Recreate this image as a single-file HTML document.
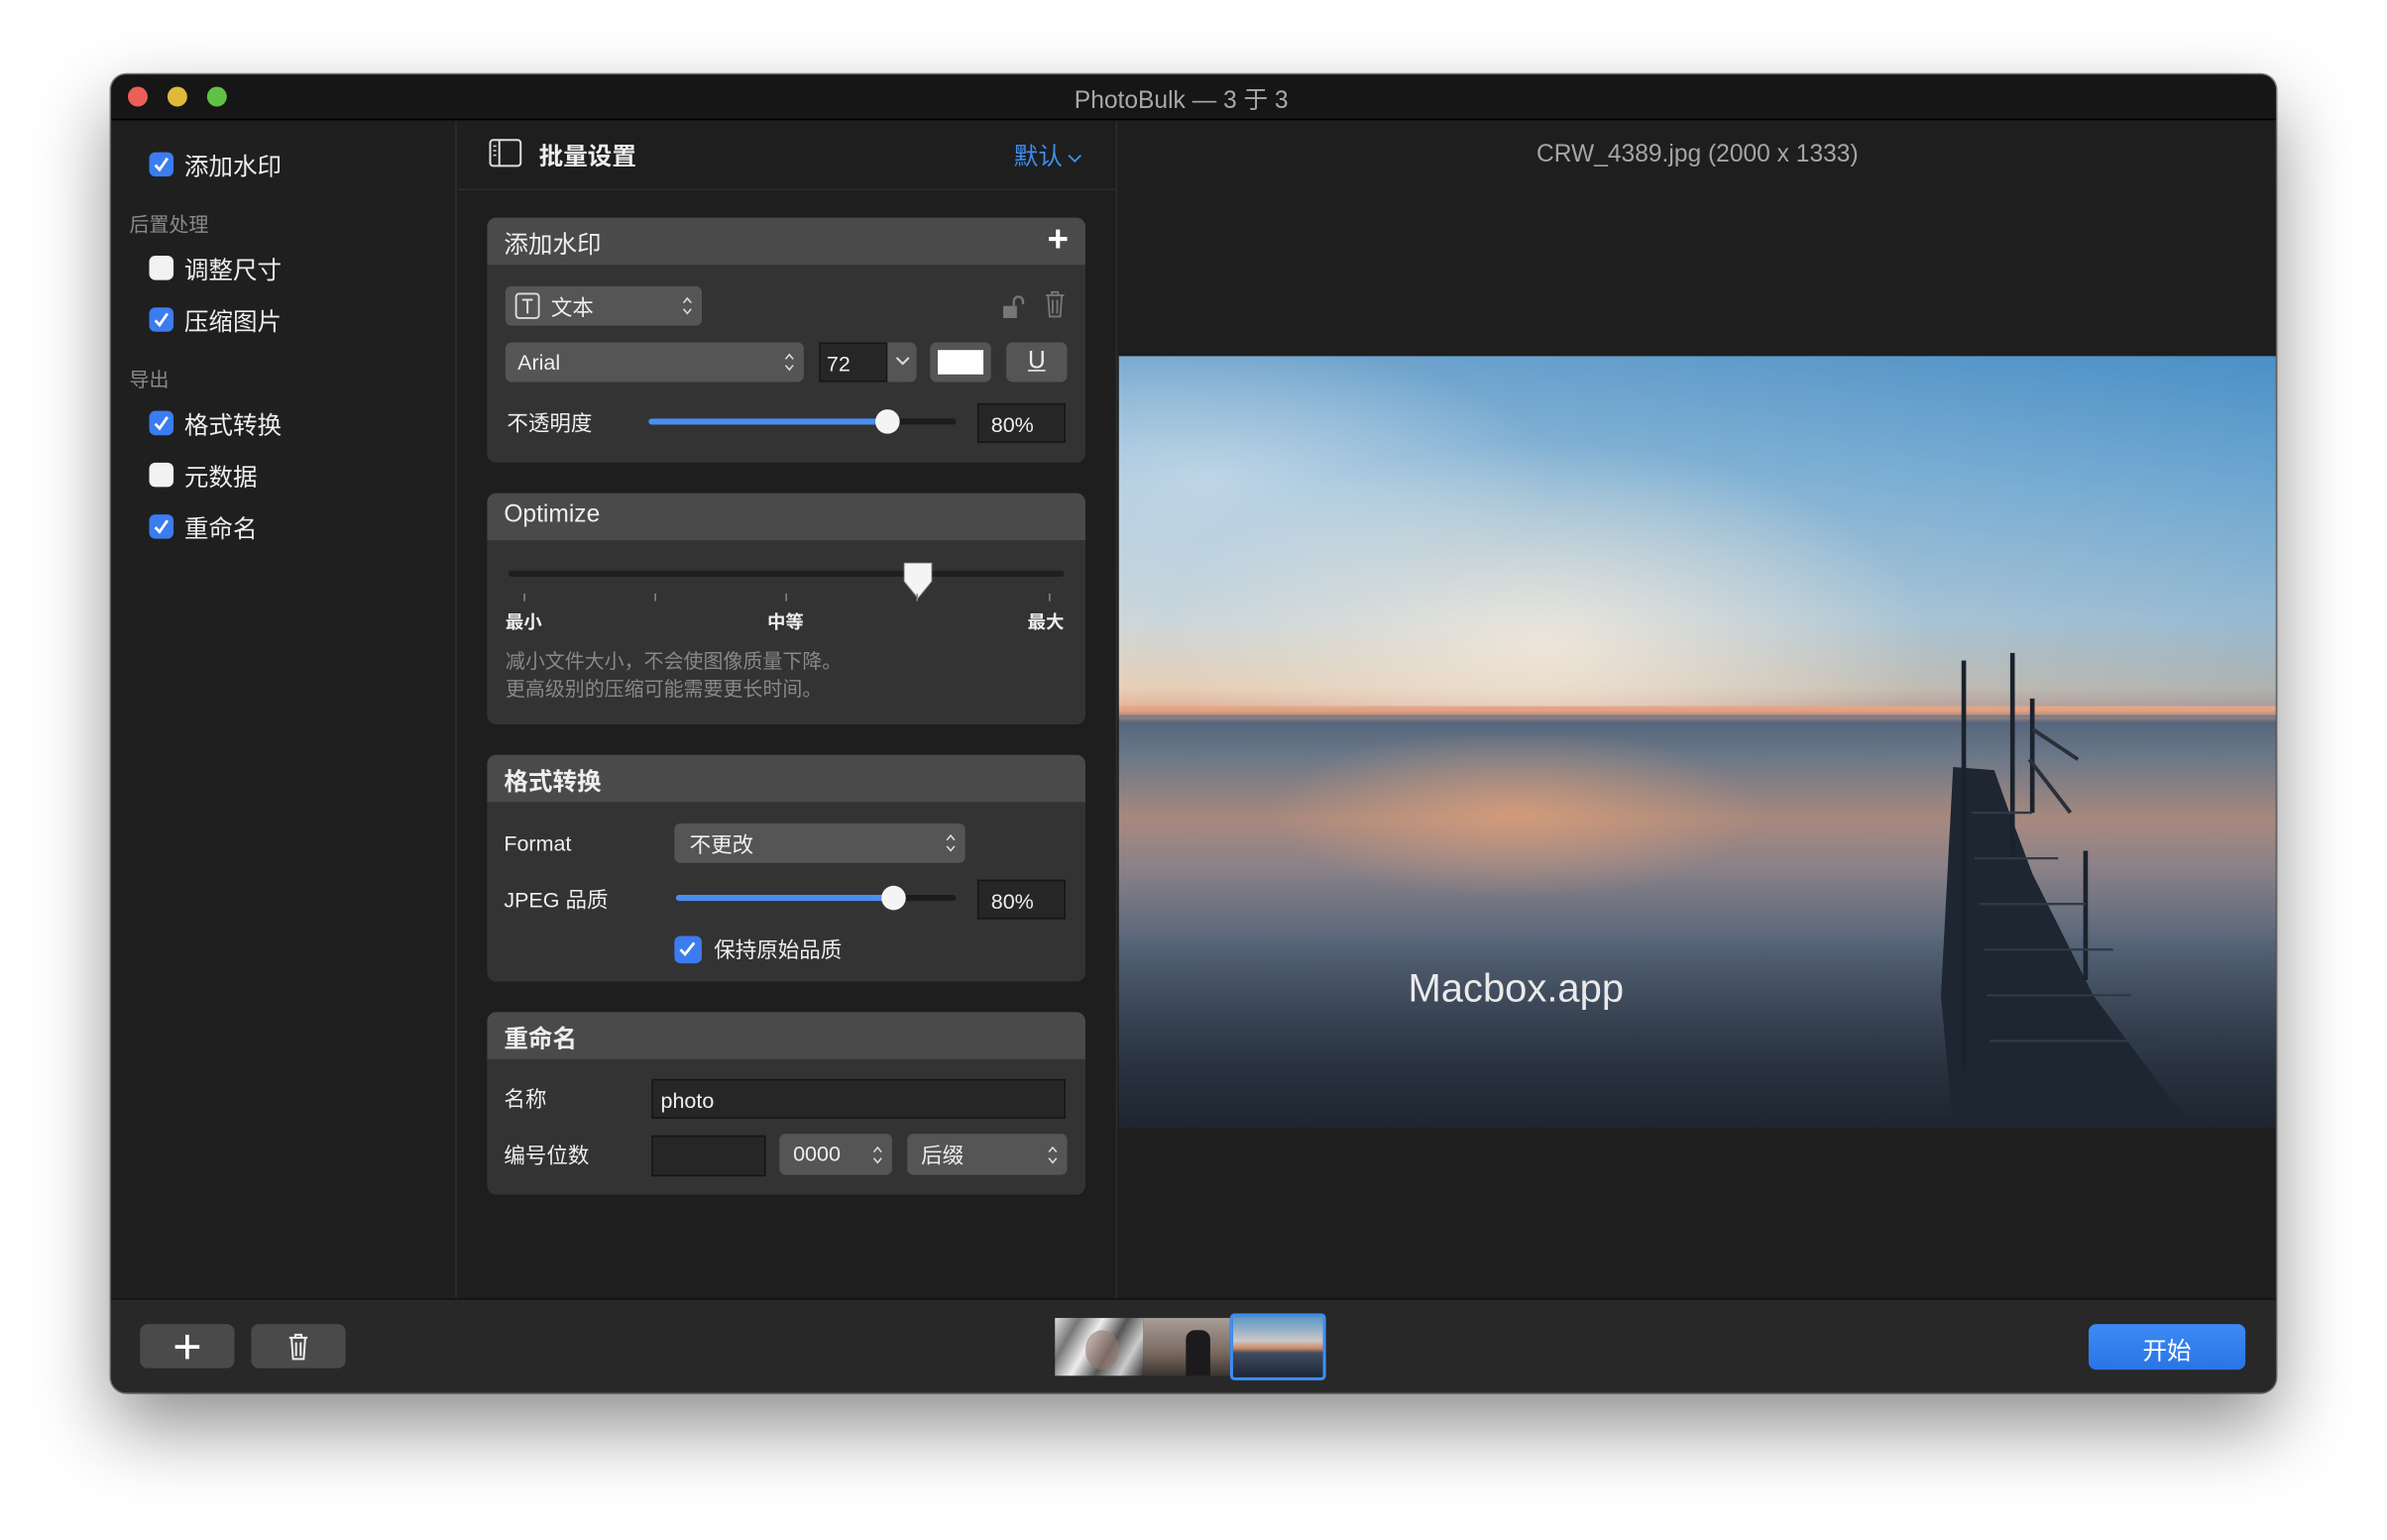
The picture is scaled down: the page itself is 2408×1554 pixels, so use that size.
<!DOCTYPE html>
<html><head><meta charset="utf-8"><style>
*{margin:0;padding:0;box-sizing:border-box}
html,body{width:2408px;height:1554px;overflow:hidden;background:#fff}
#stage{position:absolute;left:0;top:0;width:1568px;height:1012px;transform:scale(1.53571);transform-origin:0 0;font-family:"Liberation Sans","Noto Sans CJK SC",sans-serif;color:#e6e6e6}
.a{position:absolute}
.win{left:73px;top:49px;width:1422px;height:866px;border-radius:10px;background:#1e1e1e;overflow:hidden;box-shadow:0 22px 50px rgba(0,0,0,.45),0 0 0 1px rgba(0,0,0,.5)}
.tb{left:0;top:0;width:1422px;height:30px;background:#161616;border-bottom:1px solid #000}
.dot{top:8px;width:13px;height:13px;border-radius:50%}
.cb{width:16px;height:16px;border-radius:4px;background:#3b7cf0}
.cb.off{background:#f2f2f2}
.cb svg{position:absolute;left:2px;top:2px}
.lab{font-size:16px;color:#eee}
.sec{font-size:13px;color:#8a8a8a}
.card{left:247px;width:393px;background:#333;border-radius:6px;overflow:hidden}
.ch{left:0;top:0;width:393px;height:31px;background:#4a4a4a;font-size:16px;color:#eee;padding:4px 11px}
.pop{background:#555;border-radius:4px;font-size:14px;color:#eee}
.fld{background:#262626;border:1px solid #161616;font-size:14px;color:#eee}
.s14{font-size:14px;color:#eee}
.ud{position:absolute;right:6px;top:50%;margin-top:-6px}
</style></head><body><div id="stage">
<div class="a win">
 <div class="a tb">
  <div class="a dot" style="left:11px;background:#ec5f57"></div>
  <div class="a dot" style="left:37px;background:#e0b83b"></div>
  <div class="a dot" style="left:63px;background:#5fc245"></div>
  <div class="a" style="left:-8px;width:1422px;top:3px;text-align:center;font-size:16px;color:#a8a8a8">PhotoBulk — 3 于 3</div>
 </div>
 <div class="a" style="left:0;top:31px;width:227px;height:773px;background:#1f1f1f;border-right:1px solid #2e2e2e"></div>
 <div class="a cb" style="left:25px;top:51px"><svg width="12" height="12"><path d="M2 6.5l2.8 3L10 2" stroke="#fff" stroke-width="1.8" fill="none"/></svg></div>
 <div class="a lab" style="left:48px;top:47px">添加水印</div>
 <div class="a sec" style="left:12px;top:88px">后置处理</div>
 <div class="a cb off" style="left:25px;top:119px"></div>
 <div class="a lab" style="left:48px;top:115px">调整尺寸</div>
 <div class="a cb" style="left:25px;top:153px"><svg width="12" height="12"><path d="M2 6.5l2.8 3L10 2" stroke="#fff" stroke-width="1.8" fill="none"/></svg></div>
 <div class="a lab" style="left:48px;top:149px">压缩图片</div>
 <div class="a sec" style="left:12px;top:190px">导出</div>
 <div class="a cb" style="left:25px;top:221px"><svg width="12" height="12"><path d="M2 6.5l2.8 3L10 2" stroke="#fff" stroke-width="1.8" fill="none"/></svg></div>
 <div class="a lab" style="left:48px;top:217px">格式转换</div>
 <div class="a cb off" style="left:25px;top:255px"></div>
 <div class="a lab" style="left:48px;top:251px">元数据</div>
 <div class="a cb" style="left:25px;top:289px"><svg width="12" height="12"><path d="M2 6.5l2.8 3L10 2" stroke="#fff" stroke-width="1.8" fill="none"/></svg></div>
 <div class="a lab" style="left:48px;top:285px">重命名</div>
 <div class="a" style="left:228px;top:31px;width:433px;height:773px;background:#1e1e1e;border-right:1px solid #2e2e2e"></div>
 <div class="a" style="left:228px;top:75px;width:433px;height:1px;background:#2c2c2c"></div>
 <svg class="a" style="left:248px;top:42px" width="22" height="19"><rect x="1" y="1" width="20" height="17" rx="2" fill="none" stroke="#ddd" stroke-width="1.3"/><line x1="7" y1="1" x2="7" y2="18" stroke="#ddd" stroke-width="1.3"/><path d="M3 5h2M3 8h2M3 11h2" stroke="#ddd"/></svg>
 <div class="a" style="left:281px;top:40px;font-size:16px;color:#eee;font-weight:bold">批量设置</div>
 <div class="a" style="left:593px;top:40px;font-size:16px;color:#3e8ef0">默认<svg width="10" height="8" style="margin-left:3px"><path d="M1 2l4 4 4-4" stroke="#3e8ef0" stroke-width="1.2" fill="none"/></svg></div>

 <div class="a card" style="top:94px;height:161px">
  <div class="a ch">添加水印</div>
  <div class="a" style="right:11px;top:1px;font-size:24px;color:#fff;font-weight:bold">+</div>
  <div class="a pop" style="left:12px;top:45px;width:129px;height:26px">
   <svg class="a" style="left:6px;top:4px" width="17" height="18"><rect x="1" y="1" width="15" height="16" rx="2" fill="none" stroke="#ddd" stroke-width="1.2"/><path d="M5 5h7M8.5 5v9" stroke="#ddd" stroke-width="1.3"/></svg>
   <span class="a" style="left:30px;top:4px">文本</span>
   <svg class="ud" width="7" height="12"><path d="M1 4l2.5-3L6 4M1 8l2.5 3L6 8" stroke="#ddd" fill="none"/></svg>
  </div>
  <svg class="a" style="left:338px;top:50px" width="18" height="17"><rect x="1" y="8" width="9" height="8" fill="#777"/><path d="M8 8V5a3 3 0 0 1 6 0v2" stroke="#777" stroke-width="1.5" fill="none"/></svg>
  <svg class="a" style="left:366px;top:48px" width="14" height="18"><path d="M1 3h12M5 3V1h4v2M2.5 3l1 14h7l1-14M5.5 6v9M8.5 6v9" stroke="#777" stroke-width="1.2" fill="none"/></svg>
  <div class="a pop" style="left:12px;top:82px;width:196px;height:26px"><span class="a" style="left:8px;top:5px">Arial</span><svg class="ud" width="7" height="12"><path d="M1 4l2.5-3L6 4M1 8l2.5 3L6 8" stroke="#ddd" fill="none"/></svg></div>
  <div class="a fld" style="left:218px;top:82px;width:45px;height:26px;padding:5px 4px">72</div>
  <div class="a pop" style="left:263px;top:82px;width:19px;height:26px;border-radius:0 4px 4px 0"><svg class="a" style="left:5px;top:9px" width="10" height="7"><path d="M1 1l4 4 4-4" stroke="#ddd" stroke-width="1.3" fill="none"/></svg></div>
  <div class="a pop" style="left:291px;top:82px;width:40px;height:26px"><div class="a" style="left:5px;top:5px;width:30px;height:16px;background:#fff"></div></div>
  <div class="a pop" style="left:341px;top:82px;width:40px;height:26px;text-align:center;padding-top:4px;font-size:16px"><u>U</u></div>
  <div class="a s14" style="left:13px;top:125px">不透明度</div>
  <div class="a" style="left:106px;top:132px;width:202px;height:4px;border-radius:2px;background:#1c1c1c"></div>
  <div class="a" style="left:106px;top:132px;width:158px;height:4px;border-radius:2px;background:#4a8ef0"></div>
  <div class="a" style="left:255px;top:126px;width:16px;height:16px;border-radius:50%;background:#f4f4f4"></div>
  <div class="a fld" style="left:322px;top:122px;width:58px;height:26px;padding:5px 8px">80%</div>
 </div>

 <div class="a card" style="top:275px;height:152px">
  <div class="a ch" style="padding-top:6px">Optimize</div>
  <div class="a" style="left:14px;top:51px;width:365px;height:4px;border-radius:2px;background:#1f1f1f"></div>
  <svg class="a" style="left:272px;top:44px" width="22" height="26"><path d="M2 2h18v12l-9 11-9-11z" fill="#f4f4f4" stroke="#999" stroke-width=".6"/></svg>
  <div class="a" style="left:24px;top:66px;width:1px;height:5px;background:#888"></div>
  <div class="a" style="left:110px;top:66px;width:1px;height:5px;background:#888"></div>
  <div class="a" style="left:196px;top:66px;width:1px;height:5px;background:#888"></div>
  <div class="a" style="left:282px;top:66px;width:1px;height:5px;background:#888"></div>
  <div class="a" style="left:369px;top:66px;width:1px;height:5px;background:#888"></div>
  <div class="a" style="left:12px;top:76px;font-size:12px;color:#eee;font-weight:bold">最小</div>
  <div class="a" style="left:184px;top:76px;font-size:12px;color:#eee;font-weight:bold">中等</div>
  <div class="a" style="left:355px;top:76px;font-size:12px;color:#eee;font-weight:bold">最大</div>
  <div class="a" style="left:12px;top:102px;font-size:13px;color:#888;line-height:18px">减小文件大小，不会使图像质量下降。<br>更高级别的压缩可能需要更长时间。</div>
 </div>

 <div class="a card" style="top:447px;height:149px">
  <div class="a ch" style="font-weight:bold">格式转换</div>
  <div class="a s14" style="left:11px;top:50px">Format</div>
  <div class="a pop" style="left:123px;top:45px;width:191px;height:26px"><span class="a" style="left:10px;top:4px">不更改</span><svg class="ud" width="7" height="12"><path d="M1 4l2.5-3L6 4M1 8l2.5 3L6 8" stroke="#ddd" fill="none"/></svg></div>
  <div class="a s14" style="left:11px;top:85px">JPEG 品质</div>
  <div class="a" style="left:124px;top:92px;width:184px;height:4px;border-radius:2px;background:#1c1c1c"></div>
  <div class="a" style="left:124px;top:92px;width:142px;height:4px;border-radius:2px;background:#4a8ef0"></div>
  <div class="a" style="left:259px;top:86px;width:16px;height:16px;border-radius:50%;background:#f4f4f4"></div>
  <div class="a fld" style="left:322px;top:82px;width:58px;height:26px;padding:5px 8px">80%</div>
  <div class="a cb" style="left:123px;top:119px;width:18px;height:18px"><svg width="13" height="13"><path d="M2 7l3 3L11 2.5" stroke="#fff" stroke-width="1.8" fill="none"/></svg></div>
  <div class="a s14" style="left:149px;top:118px">保持原始品质</div>
 </div>

 <div class="a card" style="top:616px;height:120px">
  <div class="a ch" style="font-weight:bold">重命名</div>
  <div class="a s14" style="left:11px;top:47px">名称</div>
  <div class="a fld" style="left:108px;top:44px;width:272px;height:26px;padding:5px 5px">photo</div>
  <div class="a s14" style="left:11px;top:84px">编号位数</div>
  <div class="a fld" style="left:108px;top:81px;width:75px;height:27px"></div>
  <div class="a pop" style="left:192px;top:80px;width:74px;height:27px"><span class="a" style="left:9px;top:5px">0000</span><svg class="ud" width="7" height="12"><path d="M1 4l2.5-3L6 4M1 8l2.5 3L6 8" stroke="#ddd" fill="none"/></svg></div>
  <div class="a pop" style="left:276px;top:80px;width:105px;height:27px"><span class="a" style="left:9px;top:4px">后缀</span><svg class="ud" width="7" height="12"><path d="M1 4l2.5-3L6 4M1 8l2.5 3L6 8" stroke="#ddd" fill="none"/></svg></div>
 </div>

 <div class="a" style="left:662px;top:44px;width:760px;text-align:center;font-size:16px;color:#a5a5a5">CRW_4389.jpg (2000 x 1333)</div>
 <div class="a" style="left:662px;top:185px;width:760px;height:507px;overflow:hidden;background:linear-gradient(180deg,#5a96c6 0%,#8ab6d4 16%,#c6d2d6 34%,#e8c8a8 43%,#e2a080 46%,#56667c 47.5%,#6c7888 52%,#a8897e 60%,#8c8288 66%,#58667a 76%,#3e4a5a 88%,#27303c 100%)">
  <div class="a" style="left:0;top:0;width:760px;height:230px;background:radial-gradient(ellipse 360px 190px at 280px 190px,rgba(255,240,222,.7),rgba(255,240,222,0) 70%),radial-gradient(ellipse 300px 120px at 60px 80px,rgba(235,240,245,.45),rgba(235,240,245,0) 75%),linear-gradient(90deg,rgba(230,236,240,.2),rgba(40,130,200,.3))"></div>
  <div class="a" style="left:0;top:236px;width:760px;height:1px;background:#6e7a8a"></div>
  <div class="a" style="left:0;top:250px;width:760px;height:150px;background:radial-gradient(ellipse 200px 70px at 260px 50px,rgba(245,170,120,.55),rgba(245,170,120,0) 80%)"></div>
  <div class="a" style="left:0;top:380px;width:760px;height:127px;background:linear-gradient(180deg,rgba(30,40,50,0),rgba(20,28,38,.55))"></div>
  <svg class="a" style="left:0;top:0" width="760" height="507">
   <path d="M548 270 L575 272 L585 300 L600 340 L640 420 L705 507 L548 507 L540 420 Z" fill="#1d2631"/>
   <path d="M555 200V470M587 195V330M600 225V300M635 325V410" stroke="#1a222c" stroke-width="3"/>
   <path d="M600 245L630 265M598 265L625 300" stroke="#2a3038" stroke-width="2.5"/>
   <path d="M560 300h40M562 330h55M565 360h70M568 390h85M570 420h95M572 450h110" stroke="#2e3a46" stroke-width="1.5"/>
  </svg>
  <div class="a" style="left:190px;top:400px;font-family:'Liberation Sans',sans-serif;font-size:26px;color:#eaeaea">Macbox.app</div>
 </div>

 <div class="a" style="left:0;top:804px;width:1422px;height:62px;background:#282828;border-top:1px solid #111"></div>
 <div class="a" style="left:19px;top:821px;width:62px;height:29px;border-radius:5px;background:#4a4a4a"><svg class="a" style="left:22px;top:6px" width="18" height="18"><path d="M9 1v16M1 9h16" stroke="#fff" stroke-width="2.4"/></svg></div>
 <div class="a" style="left:92px;top:821px;width:62px;height:29px;border-radius:5px;background:#4a4a4a"><svg class="a" style="left:24px;top:6px" width="14" height="18"><path d="M1 3h12M5 3V1h4v2M2.5 3l1 14h7l1-14M5.5 6v9M8.5 6v9" stroke="#eee" stroke-width="1.3" fill="none"/></svg></div>
 <div class="a" style="left:620px;top:817px;width:58px;height:38px;background:linear-gradient(120deg,#ddd,#777 20%,#eee 40%,#555 60%,#ccc 80%,#333)"><div class="a" style="left:20px;top:8px;width:22px;height:26px;border-radius:50%;background:rgba(150,120,110,.6)"></div></div>
 <div class="a" style="left:678px;top:817px;width:57px;height:38px;background:linear-gradient(180deg,#a89c98,#7a6a60 60%,#3a3430)"><div class="a" style="left:28px;top:8px;width:16px;height:30px;background:#1c1a1c;border-radius:6px 6px 0 0"></div></div>
 <div class="a" style="left:735px;top:814px;width:63px;height:44px;border:2px solid #3f8ef0;border-radius:3px;background:linear-gradient(180deg,#5b95c5,#c8c8c8 40%,#d08a66 52%,#404c60 60%,#1e2636)"></div>
 <div class="a" style="left:1299px;top:821px;width:103px;height:30px;border-radius:5px;background:linear-gradient(#3d8af5,#2a74e6);color:#fff;font-size:16px;text-align:center;padding-top:4px">开始</div>
</div>
</div></body></html>
